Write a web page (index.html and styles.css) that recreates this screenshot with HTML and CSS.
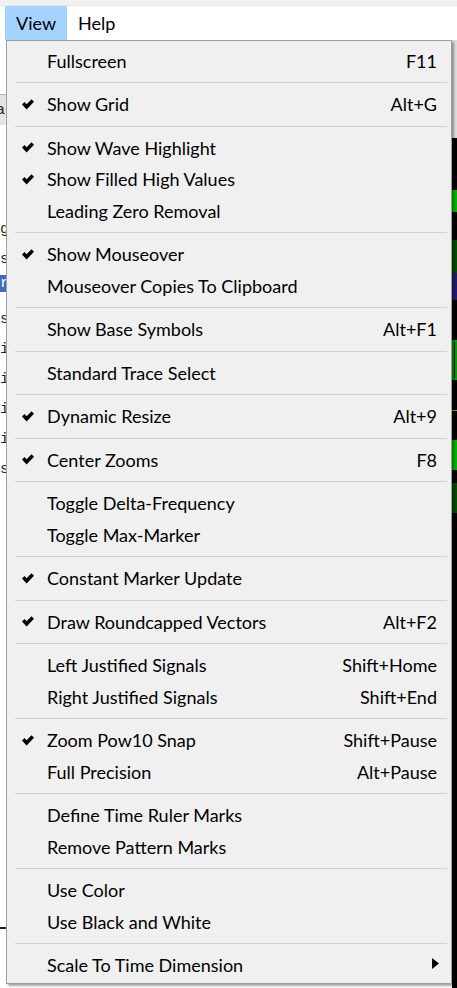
FILE: index.html
```html
<!DOCTYPE html>
<html>
<head>
<meta charset="utf-8">
<link rel="stylesheet" href="styles.css">
</head>
<body>
<div class="app">
  <div class="topstrip"></div>
  <div class="menubar">
    <span class="mb-item active">View</span>
    <span class="mb-item">Help</span>
  </div>
  <div class="workspace">
    <div class="signals">
      <div class="sig-head"></div>
      <div class="sig-row hdr">a</div>
      <div class="sig-row"></div>
      <div class="sig-row"></div>
      <div class="sig-row"></div>
      <div class="sig-row">g</div>
      <div class="sig-row">s</div>
      <div class="sig-row sel"><span class="sel-bar">r</span></div>
      <div class="sig-row">s</div>
      <div class="sig-row">i</div>
      <div class="sig-row">i</div>
      <div class="sig-row">i</div>
      <div class="sig-row">i</div>
      <div class="sig-row">s</div>
      <div class="sig-gap"></div>
      <div class="sig-line"></div>
    </div>
    <div class="waves">
      <div class="wave-head"></div>
      <div class="bar bright" style="top:150px;height:22px"></div>
      <div class="bar dark" style="top:200px;height:33px"></div>
      <div class="bar navy" style="top:233px;height:27px"></div>
      <div class="bar outline" style="top:300px;height:40px"></div>
      <div class="bar yellow" style="top:370px;height:1px"></div>
      <div class="bar bright" style="top:400px;height:30px"></div>
      <div class="bar dark" style="top:443px;height:30px"></div>
    </div>
  </div>

  <div class="menu">
    <div class="item"><span class="check"></span><span class="label">Fullscreen</span><span class="key">F11</span></div>
    <div class="sep"></div>
    <div class="item"><span class="check"><svg width="12" height="11" viewBox="0 0 12 11"><polygon points="0,5.6 2.5,3.1 4.6,5.3 9.5,0.2 12,2.7 4.6,10.6"/></svg></span><span class="label">Show Grid</span><span class="key">Alt+G</span></div>
    <div class="sep"></div>
    <div class="item"><span class="check"><svg width="12" height="11" viewBox="0 0 12 11"><polygon points="0,5.6 2.5,3.1 4.6,5.3 9.5,0.2 12,2.7 4.6,10.6"/></svg></span><span class="label">Show Wave Highlight</span><span class="key"></span></div>
    <div class="item"><span class="check"><svg width="12" height="11" viewBox="0 0 12 11"><polygon points="0,5.6 2.5,3.1 4.6,5.3 9.5,0.2 12,2.7 4.6,10.6"/></svg></span><span class="label">Show Filled High Values</span><span class="key"></span></div>
    <div class="item"><span class="check"></span><span class="label">Leading Zero Removal</span><span class="key"></span></div>
    <div class="sep"></div>
    <div class="item"><span class="check"><svg width="12" height="11" viewBox="0 0 12 11"><polygon points="0,5.6 2.5,3.1 4.6,5.3 9.5,0.2 12,2.7 4.6,10.6"/></svg></span><span class="label">Show Mouseover</span><span class="key"></span></div>
    <div class="item"><span class="check"></span><span class="label">Mouseover Copies To Clipboard</span><span class="key"></span></div>
    <div class="sep"></div>
    <div class="item"><span class="check"></span><span class="label">Show Base Symbols</span><span class="key">Alt+F1</span></div>
    <div class="sep"></div>
    <div class="item"><span class="check"></span><span class="label">Standard Trace Select</span><span class="key"></span></div>
    <div class="sep"></div>
    <div class="item"><span class="check"><svg width="12" height="11" viewBox="0 0 12 11"><polygon points="0,5.6 2.5,3.1 4.6,5.3 9.5,0.2 12,2.7 4.6,10.6"/></svg></span><span class="label">Dynamic Resize</span><span class="key">Alt+9</span></div>
    <div class="sep"></div>
    <div class="item"><span class="check"><svg width="12" height="11" viewBox="0 0 12 11"><polygon points="0,5.6 2.5,3.1 4.6,5.3 9.5,0.2 12,2.7 4.6,10.6"/></svg></span><span class="label">Center Zooms</span><span class="key">F8</span></div>
    <div class="sep"></div>
    <div class="item"><span class="check"></span><span class="label">Toggle Delta-Frequency</span><span class="key"></span></div>
    <div class="item"><span class="check"></span><span class="label">Toggle Max-Marker</span><span class="key"></span></div>
    <div class="sep"></div>
    <div class="item"><span class="check"><svg width="12" height="11" viewBox="0 0 12 11"><polygon points="0,5.6 2.5,3.1 4.6,5.3 9.5,0.2 12,2.7 4.6,10.6"/></svg></span><span class="label">Constant Marker Update</span><span class="key"></span></div>
    <div class="sep"></div>
    <div class="item"><span class="check"><svg width="12" height="11" viewBox="0 0 12 11"><polygon points="0,5.6 2.5,3.1 4.6,5.3 9.5,0.2 12,2.7 4.6,10.6"/></svg></span><span class="label">Draw Roundcapped Vectors</span><span class="key">Alt+F2</span></div>
    <div class="sep"></div>
    <div class="item"><span class="check"></span><span class="label">Left Justified Signals</span><span class="key">Shift+Home</span></div>
    <div class="item"><span class="check"></span><span class="label">Right Justified Signals</span><span class="key">Shift+End</span></div>
    <div class="sep"></div>
    <div class="item"><span class="check"><svg width="12" height="11" viewBox="0 0 12 11"><polygon points="0,5.6 2.5,3.1 4.6,5.3 9.5,0.2 12,2.7 4.6,10.6"/></svg></span><span class="label">Zoom Pow10 Snap</span><span class="key">Shift+Pause</span></div>
    <div class="item"><span class="check"></span><span class="label">Full Precision</span><span class="key">Alt+Pause</span></div>
    <div class="sep"></div>
    <div class="item"><span class="check"></span><span class="label">Define Time Ruler Marks</span><span class="key"></span></div>
    <div class="item"><span class="check"></span><span class="label">Remove Pattern Marks</span><span class="key"></span></div>
    <div class="sep"></div>
    <div class="item"><span class="check"></span><span class="label">Use Color</span><span class="key"></span></div>
    <div class="item"><span class="check"></span><span class="label">Use Black and White</span><span class="key"></span></div>
    <div class="sep"></div>
    <div class="item"><span class="check"></span><span class="label">Scale To Time Dimension</span><span class="key arrow"><svg width="7" height="11" viewBox="0 0 7 11"><polygon points="0,0 7,5.5 0,11"/></svg></span></div>
  </div>
</div>
</body>
</html>
```
FILE: styles.css
```css
html, body {
  margin: 0;
  padding: 0;
}
body {
  width: 457px;
  height: 988px;
  overflow: hidden;
  background: #f0f0f0;
  font-family: Lato, "Liberation Sans", sans-serif;
  font-size: 18px;
  color: #000;
}
.app {
  position: relative;
  width: 457px;
  height: 988px;
  display: flex;
  flex-direction: column;
}
.topstrip {
  height: 5px;
  background: #f0f0f0;
  border-bottom: 1px solid #e6e6e6;
}
.menubar {
  height: 34px;
  background: #fff;
  display: flex;
  padding-left: 5px;
}
.mb-item {
  padding: 0 11px;
  line-height: 34px;
}
.mb-item.active {
  background: #a4d3ff;
}
.workspace {
  flex: 1;
  display: flex;
}
.signals {
  width: 452px;
  background: #fff;
  display: flex;
  flex-direction: column;
  font-family: "Liberation Mono", monospace;
  font-size: 15px;
}
.sig-head {
  height: 54px;
  border-bottom: 1px solid #b0b0b0;
  background: #fff;
}
.sig-row {
  height: 30px;
  line-height: 30px;
  color: #222;
}
.sig-row.hdr {
  background: #e4e4e4;
  line-height: 32px;
  text-indent: -4px;
}
.sig-row.sel {
  line-height: 17px;
}
.sel-bar {
  display: block;
  height: 17px;
  background: #3d6bc4;
  color: #fff;
}
.sig-gap {
  height: 442px;
}
.sig-line {
  height: 2px;
  background: #222;
}
.waves {
  flex: 1;
  position: relative;
  background: #000;
}
.wave-head {
  height: 98px;
  background: #dcdcdc;
}
.bar {
  position: absolute;
  left: 0;
  right: 0;
}
.bar.bright { background: #00b400; }
.bar.dark { background: #004d00; }
.bar.navy { background: #1c1c6a; }
.bar.outline { border: 2px solid #00a000; box-sizing: border-box; }
.bar.yellow { background: #a0a000; }

.menu {
  position: absolute;
  left: 6px;
  top: 40px;
  width: 444px;
  border: 1px solid #a0a0a0;
  background: #f0f0f0;
  padding: 4px 0 2px;
  box-shadow: 2px 2px 2px rgba(0, 0, 0, 0.35);
}
.item {
  height: 31.5px;
  display: flex;
  align-items: center;
  padding-right: 14px;
  white-space: nowrap;
}
.check {
  width: 40px;
  height: 100%;
  display: flex;
  align-items: center;
  justify-content: center;
  padding-left: 1px;
  box-sizing: border-box;
}
.check svg {
  display: block;
  fill: #000;
}
.label {
  flex: 1;
}
.key.arrow {
  margin-right: -2px;
  display: flex;
  align-items: center;
}
.key.arrow svg {
  display: block;
  fill: #000;
  margin-top: -4px;
}
.sep {
  height: 12px;
  display: flex;
  align-items: center;
  margin: 0 4px 0 8px;
}
.sep::before {
  content: "";
  display: block;
  width: 100%;
  height: 1px;
  background: #d2d2d2;
}
```
